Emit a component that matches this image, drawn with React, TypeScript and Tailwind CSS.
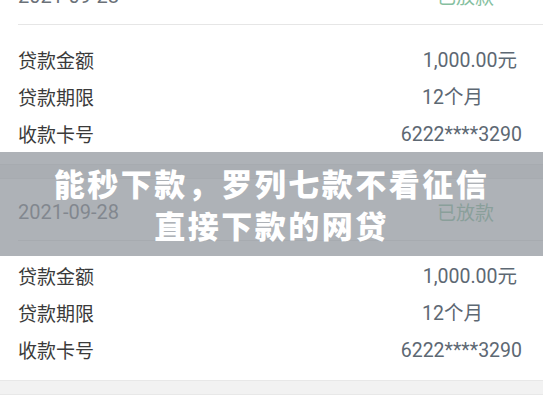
const rows = [
  { label: "贷款金额", value: "1,000.00元", pad: "pr-[26px]" },
  { label: "贷款期限", value: "12个月", pad: "pr-[60px]" },
  { label: "收款卡号", value: "6222****3290", pad: "pr-[21px]" },
];

function LoanCard() {
  return (
    <div className="bg-white">
      <div className="flex h-[61px] items-start justify-between pl-[18px] pr-[49px] pt-[20px]">
        <span className="text-[20px] leading-[26px] text-[#6b7178] font-['Roboto','Noto_Sans_CJK_SC',sans-serif]">
          2021-09-28
        </span>
        <span className="text-[19px] leading-[26px] text-[#86bf9f] font-['Noto_Sans_CJK_SC',sans-serif]">
          已放款
        </span>
      </div>
      <div className="ml-[18px] border-t border-[#e6e6e6]" />
      <div className="pt-[17px] pb-[11px]">
        {rows.map((r) => (
          <div key={r.label} className="flex h-[37px] items-center justify-between pl-[18px]">
            <span className="text-[19px] text-[#3a3a3a] font-['Noto_Sans_CJK_SC',sans-serif]">{r.label}</span>
            <span
              className={`${r.pad} text-[19.5px] text-[#5d6873] font-['Roboto','Noto_Sans_CJK_SC',sans-serif]`}
            >
              {r.value}
            </span>
          </div>
        ))}
      </div>
    </div>
  );
}

function Gap() {
  return <div className="h-[15px] border-y border-[#e8e8e8] bg-[#f2f2f2]" />;
}

export default function App() {
  return (
    <div className="relative h-[408px] w-[543px] overflow-hidden bg-white">
      <div className="-mt-[37px]">
        <LoanCard />
        <Gap />
        <LoanCard />
        <Gap />
        <div className="h-[40px] bg-white" />
      </div>

      <div className="absolute left-0 right-0 top-[152px] flex h-[104px] flex-col items-center justify-center bg-[#8c9298]/70">
        <p className="text-center text-[31px] font-black leading-[42px] tracking-[2.5px] text-white font-['Noto_Sans_CJK_SC',sans-serif]">
          能秒下款，罗列七款不看征信
          <br />
          直接下款的网贷
        </p>
      </div>
    </div>
  );
}
